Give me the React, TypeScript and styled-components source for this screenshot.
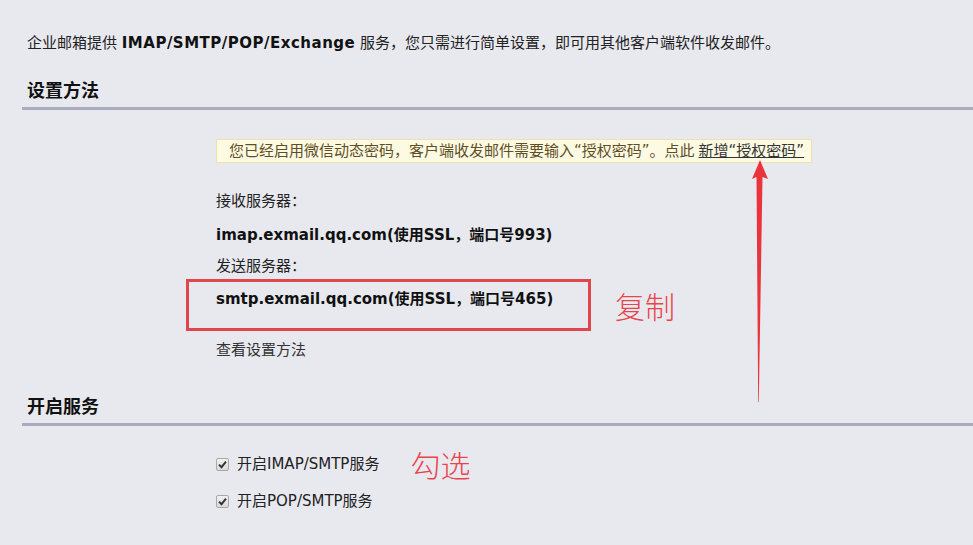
import React from "react";
import styled, { createGlobalStyle } from "styled-components";

const GlobalStyle = createGlobalStyle`
  html, body {
    margin: 0;
    padding: 0;
    background: #e8e9ef;
  }
  body {
    font-family: "DejaVu Sans", "Noto Sans CJK SC", sans-serif;
    color: #222;
    overflow: hidden;
  }
`;

const Page = styled.div`
  position: relative;
  width: 973px;
  height: 545px;
  box-sizing: border-box;
  padding: 33px 0 0 22px;
`;

const Intro = styled.p`
  margin: 0;
  padding-left: 5px;
  font-size: 15px;
  line-height: 20px;
  color: #222;

  b {
    font-weight: bold;
    color: #111;
    letter-spacing: 0.5px;
  }
`;

const SectionTitle = styled.h2<{ $top: number }>`
  margin: ${(p) => p.$top}px 0 0;
  padding: 0 0 4px 5px;
  font-size: 18px;
  line-height: 24px;
  font-weight: bold;
  color: #111;
  border-bottom: 3px solid #a9abbf;
`;

const SectionBody = styled.div`
  padding-left: 194px;
  display: flex;
  flex-direction: column;
  align-items: flex-start;
`;

const Notice = styled.div`
  margin-top: 29px;
  width: 596px;
  box-sizing: border-box;
  border: 1px solid #eee2a6;
  background: #fdfae3;
  padding: 0 0 0 12px;
  font-size: 15px;
  line-height: 22px;
  color: #5f4f24;

  a {
    color: #333;
    text-decoration: underline;
    margin-left: 4px;
  }
`;

const Label = styled.div<{ $top: number }>`
  margin-top: ${(p) => p.$top}px;
  font-size: 15px;
  line-height: 20px;
  color: #222;
`;

const Server = styled.div<{ $top?: number }>`
  margin-top: ${(p) => p.$top ?? 0}px;
  font-size: 15px;
  line-height: 24px;
  font-weight: bold;
  color: #111;
`;

const MarkRow = styled.div<{ $top: number }>`
  margin-top: ${(p) => p.$top}px;
  display: flex;
  align-items: center;
`;

const RedBox = styled.div`
  margin-left: -30px;
  width: 405px;
  height: 52px;
  box-sizing: border-box;
  border: 3px solid #e0474d;
  padding: 5px 0 0 27px;
`;

const Annotation = styled.span<{ $gap: number }>`
  margin-left: ${(p) => p.$gap}px;
  font-family: "Noto Sans CJK SC", sans-serif;
  font-weight: 300;
  font-size: 30px;
  line-height: 20px;
  color: #e8454b;
`;

const LinkText = styled.div`
  margin-top: 9px;
  font-size: 15px;
  line-height: 20px;
  color: #333;
`;

const CheckRow = styled.label<{ $top: number }>`
  margin-top: ${(p) => p.$top}px;
  display: flex;
  align-items: center;
  font-size: 15px;
  line-height: 20px;
  color: #222;
`;

const Box = styled.span`
  display: inline-flex;
  align-items: center;
  justify-content: center;
  width: 13px;
  height: 13px;
  box-sizing: border-box;
  margin-right: 8px;
  border: 1px solid #a8a8a8;
  border-radius: 2px;
  background: linear-gradient(#f2f2f2, #d9d9d9);
`;

const Arrow = styled.svg`
  position: absolute;
  left: 745px;
  top: 156px;
`;

function Check({ children }: { children: React.ReactNode }) {
  return (
    <>
      <Box>
        <svg width="9" height="9" viewBox="0 0 9 9">
          <path d="M1 4.6 L3.5 7.2 L8 1.6" fill="none" stroke="#333" strokeWidth="1.9" />
        </svg>
      </Box>
      {children}
    </>
  );
}

export default function App() {
  return (
    <Page>
      <GlobalStyle />
      <Intro>
        企业邮箱提供 <b>IMAP/SMTP/POP/Exchange</b> 服务，您只需进行简单设置，即可用其他客户端软件收发邮件。
      </Intro>

      <SectionTitle $top={26}>设置方法</SectionTitle>
      <SectionBody>
        <Notice>
          您已经启用微信动态密码，客户端收发邮件需要输入“授权密码”。点此
          <a>新增“授权密码”</a>
        </Notice>
        <Label $top={28}>接收服务器：</Label>
        <Server $top={12}>imap.exmail.qq.com(使用SSL，端口号993)</Server>
        <Label $top={9}>发送服务器：</Label>
        <MarkRow $top={3}>
          <RedBox>
            <Server>smtp.exmail.qq.com(使用SSL，端口号465)</Server>
          </RedBox>
          <Annotation $gap={24}>复制</Annotation>
        </MarkRow>
        <LinkText>查看设置方法</LinkText>
      </SectionBody>

      <SectionTitle $top={35}>开启服务</SectionTitle>
      <SectionBody>
        <MarkRow $top={28}>
          <CheckRow $top={0}>
            <Check>开启IMAP/SMTP服务</Check>
          </CheckRow>
          <Annotation $gap={31}>勾选</Annotation>
        </MarkRow>
        <CheckRow $top={17}>
          <Check>开启POP/SMTP服务</Check>
        </CheckRow>
      </SectionBody>

      <Arrow width="30" height="250" viewBox="0 0 30 250">
        <path d="M15 4 L23 23 L17.5 21 L13.8 246 L13.2 246 L11.5 21 L7 23 Z" fill="#ea343b" />
      </Arrow>
    </Page>
  );
}
